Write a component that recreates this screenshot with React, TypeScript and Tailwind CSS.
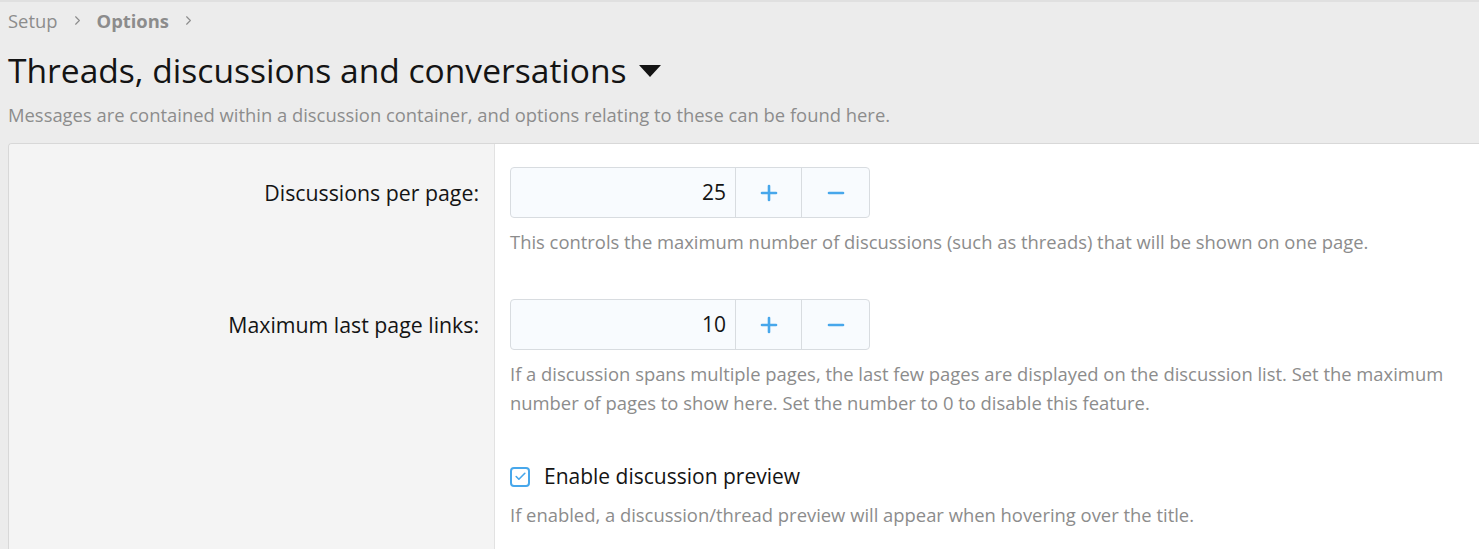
import { Check, ChevronRight, Minus, Plus } from 'lucide-react';

const font = { fontFamily: '"Open Sans", "Noto Sans", sans-serif' };

function Spinner({ value }: { value: number }) {
  return (
    <div className="flex h-[51px] w-[360px] overflow-hidden rounded-[4px] border border-[#d8dce0] bg-[#f8fbfe]">
      <div className="flex flex-1 items-center justify-end pr-[9px] text-[21px] text-[#141414]">{value}</div>
      <button className="flex w-[66px] items-center justify-center border-l border-[#d8dce0] text-[#47a7eb]">
        <Plus size={24} strokeWidth={2.6} />
      </button>
      <button className="flex w-[68px] items-center justify-center border-l border-[#d8dce0] text-[#47a7eb]">
        <Minus size={24} strokeWidth={2.6} />
      </button>
    </div>
  );
}

function Row({ label, children, pt, pb }: { label?: string; children: React.ReactNode; pt: string; pb: string }) {
  return (
    <div className="flex">
      <div className={`flex w-[486px] shrink-0 justify-end border-r border-[#e2e2e2] bg-[#f4f4f4] pr-[15px] ${pt} ${pb}`}>
        {label && <div className="flex h-[51px] items-center text-[21.3px] text-[#141414]">{label}</div>}
      </div>
      <div className={`flex-1 bg-white pl-[15px] pr-[16px] ${pt} ${pb}`}>{children}</div>
    </div>
  );
}

export default function App() {
  return (
    <div className="min-h-[549px] border-t-2 border-[#e0e0e0] bg-[#ececec]" style={font}>
      <div className="flex h-[37px] items-center gap-[12px] px-[8px] text-[18.4px] text-[#8c8c8c]">
        <span>Setup</span>
        <ChevronRight size={15} strokeWidth={1.8} />
        <span className="font-bold">Options</span>
        <ChevronRight size={15} strokeWidth={1.8} />
      </div>
      <div className="flex items-center gap-[12px] px-[8px] pt-[5px]">
        <h1 className="text-[33.6px] leading-[52px] text-[#141414]">Threads, discussions and conversations</h1>
        <svg width="22" height="13" viewBox="0 0 22 13" className="mt-[2px]">
          <path d="M0 0h22L11 12z" fill="#141414" />
        </svg>
      </div>
      <p className="px-[8px] pt-[6px] text-[18.4px] leading-[26px] text-[#8c8c8c]">
        Messages are contained within a discussion container, and options relating to these can be found here.
      </p>
      <div className="ml-[8px] mt-[15px] overflow-hidden rounded-tl-[4px] border-l border-t border-[#d8d8d8]">
        <Row label="Discussions per page:" pt="pt-[23px]" pb="pb-[20px]">
          <Spinner value={25} />
          <p className="mt-[9px] text-[18.4px] leading-[29px] text-[#8c8c8c]">
            This controls the maximum number of discussions (such as threads) that will be shown on one page.
          </p>
        </Row>
        <Row label="Maximum last page links:" pt="pt-[23px]" pb="pb-[20px]">
          <Spinner value={10} />
          <p className="mt-[9px] text-[18.4px] leading-[29px] text-[#8c8c8c]">
            If a discussion spans multiple pages, the last few pages are displayed on the discussion list. Set the maximum
            number of pages to show here. Set the number to 0 to disable this feature.
          </p>
        </Row>
        <Row pt="pt-[25px]" pb="pb-[30px]">
          <label className="flex items-center gap-[14px] text-[21px] leading-[29px] text-[#141414]">
            <span className="flex h-[20px] w-[20px] items-center justify-center rounded-[4px] border-2 border-[#47a7eb] bg-white text-[#47a7eb]">
              <Check size={13} strokeWidth={3} />
            </span>
            Enable discussion preview
          </label>
          <p className="mt-[9px] text-[18.4px] leading-[29px] text-[#8c8c8c]">
            If enabled, a discussion/thread preview will appear when hovering over the title.
          </p>
        </Row>
      </div>
    </div>
  );
}
